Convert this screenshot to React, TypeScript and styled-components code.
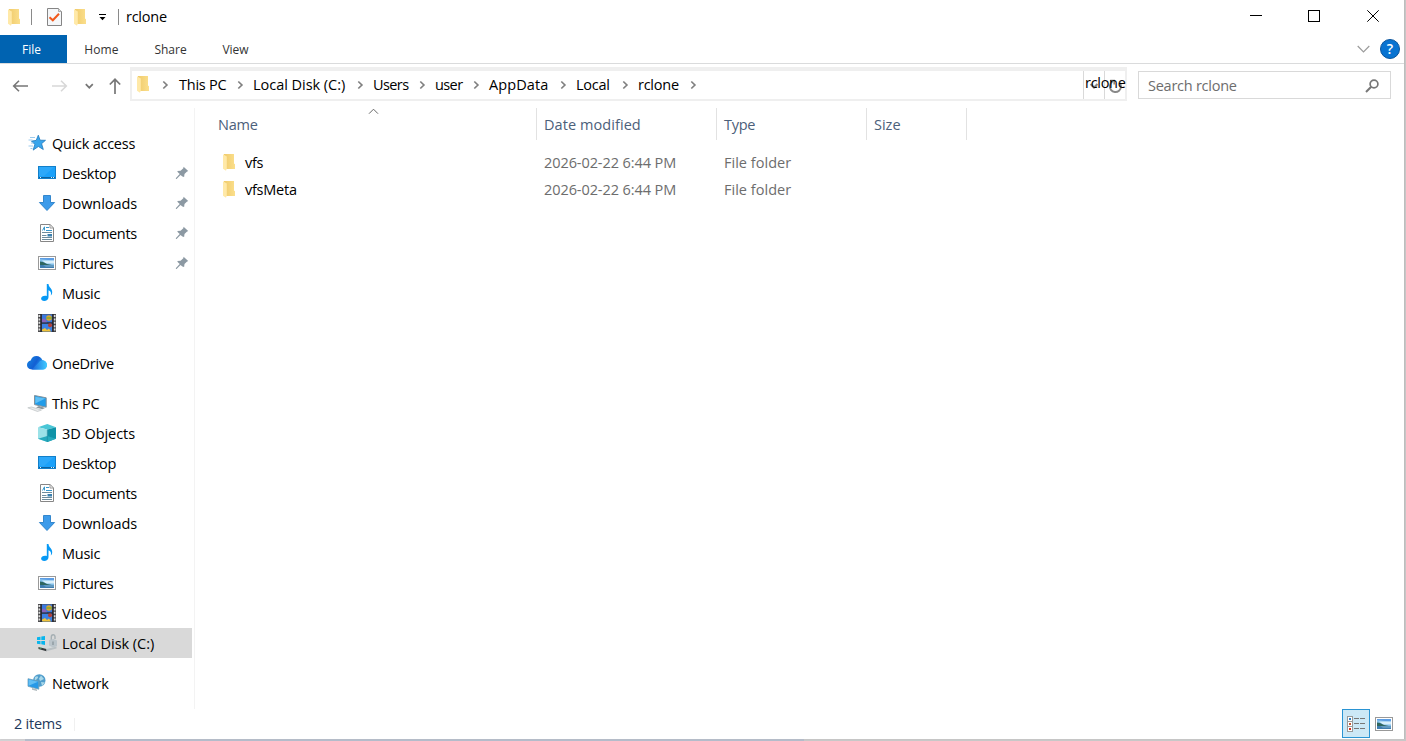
import React from 'react';
import styled, { createGlobalStyle } from 'styled-components';

const GlobalStyle = createGlobalStyle`
  * { box-sizing: border-box; }
  body {
    margin: 0;
    overflow: hidden;
    background: #c9cacc;
    font-family: 'Open Sans', 'Noto Sans', sans-serif;
    font-size: 14.5px;
    color: #000;
  }
  svg { display: block; flex: none; }
`;

const Screen = styled.div`
  width: 1406px;
  height: 741px;
  display: flex;
  flex-direction: column;
  background: linear-gradient(90deg, #d2d2d4 0 25px, #b4bccb 25px 804px, #c8c8c8 804px);
`;

const Window = styled.div`
  width: 1404px;
  height: 739px;
  display: flex;
  flex-direction: column;
  background: #fff;
  box-shadow: 1px 0 1px #bdbdbd;
`;

const TitleBar = styled.header`
  height: 35px;
  display: flex;
  align-items: center;
  padding: 0 2px 2px 7px;
`;

const Divider = styled.span<{ $left: number; $right: number }>`
  width: 1px;
  height: 16px;
  margin: 0 ${p => p.$right}px 0 ${p => p.$left}px;
  background: #8a8a8a;
`;

const Label = styled.span<{ $track?: number; $size?: number }>`
  display: block;
  white-space: nowrap;
  line-height: 20px;
  letter-spacing: ${p => p.$track ?? -0.25}px;
  font-size: ${p => p.$size ?? 14.5}px;
`;

const QuickTools = styled.div`
  display: flex;
  align-items: center;
  gap: 12px;
  margin-left: 11px;
`;

const WindowButtons = styled.div`
  margin-left: auto;
  display: flex;
  padding-bottom: 1px;
`;

const WindowButton = styled.button`
  width: 58.5px;
  height: 32px;
  border: 0;
  padding: 0;
  background: none;
  display: flex;
  align-items: center;
  justify-content: center;
`;

const Ribbon = styled.nav`
  height: 29px;
  display: flex;
  border-bottom: 1px solid #dadbdc;
  padding-right: 4px;
`;

const RibbonTab = styled.div<{ $width: number; $active?: boolean }>`
  width: ${p => p.$width}px;
  height: 28px;
  display: flex;
  align-items: center;
  justify-content: center;
  padding: 2px ${p => (p.$active ? 4 : 0)}px 0 0;
  color: ${p => (p.$active ? '#fff' : '#333')};
  background: ${p => (p.$active ? '#0063b1' : 'none')};
`;

const RibbonTools = styled.div`
  margin-left: auto;
  display: flex;
  align-items: center;
  gap: 10px;
`;

const HelpButton = styled.div`
  width: 20px;
  height: 20px;
  border-radius: 50%;
  border: 1px solid #0a549c;
  background: #0873d1;
  color: #fff;
  font-size: 14px;
  font-weight: 600;
  line-height: 18px;
  text-align: center;
`;

const NavBar = styled.div`
  height: 38px;
  flex: none;
  display: flex;
  align-items: flex-start;
  padding-top: 3px;
`;

const NavButtons = styled.div`
  width: 130px;
  height: 37px;
  display: flex;
  align-items: center;
  padding-left: 12px;
`;

const AddressBar = styled.div`
  width: 997px;
  height: 34px;
  display: flex;
  align-items: center;
  border: 2px solid #efefef;
  border-top-width: 4px;
  padding-left: 4px;
`;

const RootCrumb = styled.div`
  width: 43px;
  display: flex;
  align-items: center;
  gap: 12px;
  > svg:first-child { margin-bottom: 2px; }
`;

const Crumb = styled.span<{ $width: number }>`
  width: ${p => p.$width}px;
  height: 24px;
  display: flex;
  align-items: center;
  justify-content: space-between;
`;

const CrumbArrow = styled.span`
  padding-right: 9px;
`;

const AddressTools = styled.div`
  position: relative;
  margin-left: auto;
  width: 42px;
  height: 28px;
  display: flex;
  border-left: 1px solid #d9d9d9;
`;

const AddressTool = styled.div`
  width: 21px;
  height: 28px;
  padding-top: 2px;
  display: flex;
  align-items: center;
  justify-content: center;
  & + & { border-left: 1px solid #d9d9d9; }
`;

const FloatingName = styled.div`
  position: absolute;
  left: 1px;
  top: 2px;
`;

const SearchBox = styled.div`
  width: 253px;
  height: 28px;
  margin: 4px 0 0 11px;
  border: 1px solid #d9d9d9;
  display: flex;
  align-items: center;
  justify-content: space-between;
  padding: 1px 11px 0 9px;
  color: #6d6d6d;
`;

const Body = styled.div`
  flex: 1;
  display: flex;
  padding-top: 6px;
`;

const Sidebar = styled.aside`
  width: 195px;
  height: 601px;
  border-right: 1px solid #f3f3f3;
  padding-top: 20px;
`;

const SideGroup = styled.div`
  margin-bottom: 10px;
`;

const SideItem = styled.div<{ $root?: boolean; $selected?: boolean }>`
  width: 192px;
  height: 30px;
  display: flex;
  align-items: center;
  gap: 5px;
  padding-left: ${p => (p.$root ? 27 : 37)}px;
  padding-right: 3px;
  background: ${p => (p.$selected ? '#d9d9d9' : 'none')};
  > ${Label} { padding-top: 2px; }
  > svg:last-child { margin-left: auto; }
`;

const IconBox = styled.span`
  width: 20px;
  display: flex;
  justify-content: center;
`;

const FileList = styled.main`
  flex: 1;
`;

const Columns = styled.div`
  position: relative;
  display: flex;
  height: 32px;
  color: #4c607a;
  margin-bottom: 9px;
`;

const Column = styled.div<{ $width: number; $first?: boolean }>`
  width: ${p => p.$width}px;
  height: 32px;
  display: flex;
  align-items: center;
  padding: 2px 0 0 ${p => (p.$first ? 23 : 7)}px;
  border-right: 1px solid #e2e2e2;
`;

const SortMark = styled.div`
  position: absolute;
  left: 173px;
  top: 0;
`;

const FileRow = styled.div`
  height: 27px;
  display: flex;
  align-items: center;
`;

const Cell = styled.div<{ $width: number; $first?: boolean }>`
  width: ${p => p.$width}px;
  display: flex;
  align-items: center;
  gap: 9px;
  padding-left: ${p => (p.$first ? 27 : 7)}px;
  color: ${p => (p.$first ? '#000' : '#6d6d6d')};
  > svg { margin-bottom: 2px; }
`;

const StatusBar = styled.footer`
  height: 30px;
  display: flex;
  align-items: center;
  padding: 0 10px 0 14px;
  color: #1e395b;
`;

const StatusCount = styled.div`
  width: 61px;
  height: 13px;
  display: flex;
  align-items: center;
  border-right: 1px solid #f0f0f0;
`;

const ViewButtons = styled.div`
  margin-left: auto;
  display: flex;
  align-items: center;
  gap: 4px;
  > svg { margin-bottom: 1px; }
`;

const ViewButton = styled.div`
  width: 28px;
  height: 29px;
  border: 1px solid #2a94d3;
  background: #cce8f6;
  display: flex;
  align-items: center;
  justify-content: center;
  margin-bottom: 1px;
`;

const Folder = () => (
  <svg width="14" height="18" viewBox="0 0 14 18">
    <defs>
      <linearGradient id="folderBack"><stop stopColor="#f0cb6c" /><stop offset="1" stopColor="#fbdf8c" /></linearGradient>
    </defs>
    <path d="M2 1H12V10.5L13 11.3V16H4.5L2 14Z" fill="url(#folderBack)" />
    <path d="M1 1.2L4.8 3.4V15.5L4 17.8L1 15.8Z" fill="#ffe9a8" />
  </svg>
);

const TaskSheet = () => (
  <svg width="15" height="18" viewBox="0 0 15 18">
    <path d="M.5 .5H11.5L14.5 3.5V17.5H.5Z" fill="#f5f7f9" stroke="#858585" />
    <path d="M11.5 .5V3.5H14.5" fill="#ddd" stroke="#999" strokeWidth=".8" />
    <path d="M2.5 9.3L5.8 12.3L12 5.7" fill="none" stroke="#f1591c" strokeWidth="2" />
  </svg>
);

const Chevron = () => (
  <svg width="7" height="10" viewBox="0 0 7 10">
    <path d="M1.3 1.5L4.9 5L1.3 8.5" fill="none" stroke="#808080" strokeWidth="1.7" />
  </svg>
);

const Pin = () => (
  <svg width="14" height="14" viewBox="0 0 14 14">
    <path d="M8.6 .8L13.2 5.1L11.8 5.7L9.5 8L9.1 11L7.4 10.6L5.5 8.9L1.6 13L.8 13.1L1 12L4.7 8L2.6 6.1L2.4 5L5.6 4.7L8.3 2.2Z" fill="#8c99a3" />
  </svg>
);

const QuickIcon = () => (
  <svg width="20" height="18" viewBox="0 0 20 18">
    <path d="M11.3 1.2L13.1 6.2L18.5 6.3L14.6 9.7L16.3 15.5L11.4 12.5L6.2 16.1L7.8 10.4L4.5 7.1L9.2 6.4Z" fill="#38a5ec" stroke="#1f78bd" strokeWidth=".8" />
    <path d="M3 3.5H8M1.5 6H5.5M4 9H6.5M1.5 12H6M3.5 14.5H5.5" stroke="#9ccbed" strokeWidth="1" />
  </svg>
);

const DesktopIcon = () => (
  <svg width="20" height="18" viewBox="0 0 20 18">
    <rect x="1.5" y="2.5" width="17" height="12" fill="#1ba1fa" stroke="#127fc9" />
    <path d="M2 3H17L7 12H2Z" fill="#45b3fb" opacity=".4" />
    <path d="M2 13.5H18" stroke="#0c629f" />
    <path d="M3 13.5H4M14 13.5H15M16 13.5H17" stroke="#d8f1ff" />
  </svg>
);

const DownloadIcon = () => (
  <svg width="20" height="18" viewBox="0 0 20 18">
    <path d="M6.5 1.5H13.5V8.5H17.6L10 16.5L2.4 8.5H6.5Z" fill="#3d9bea" stroke="#287fc8" strokeWidth=".9" />
  </svg>
);

const DocumentIcon = () => (
  <svg width="20" height="18" viewBox="0 0 20 18">
    <path d="M3.5 .5H13.2L16.5 4V17.5H3.5Z" fill="#fff" stroke="#868686" />
    <path d="M13 .5V4H16.5" fill="none" stroke="#999" />
    <path d="M5.5 6.5L7.5 2.8V6.5M9 3.5H12M9 6.5H15" fill="none" stroke="#3696cb" />
    <path d="M5 8.5H15M5 11.5H9.5M5 13.5H15M5 15.5H15" stroke="#6d8b9c" />
    <rect x="10.5" y="10" width="4.5" height="2.5" fill="#397fae" />
  </svg>
);

const PictureIcon = () => (
  <svg width="20" height="18" viewBox="0 0 20 18">
    <rect x="1.5" y="2.5" width="17" height="13" fill="#fff" stroke="#999" />
    <rect x="3" y="4" width="14" height="10" fill="#83bfea" />
    <path d="M3 4H17V6.5L11 6L3 5Z" fill="#5c9de4" />
    <path d="M5 6.5H17V9.5H9Z" fill="#d8effb" />
    <path d="M3 7.5L6 8L10 10L16 11.2H3Z" fill="#2f665e" />
    <path d="M3 11L17 11V14H3Z" fill="#3f7db0" />
    <path d="M6 11.5H17V12.5H9Z" fill="#83b5cf" />
  </svg>
);

const MusicIcon = () => (
  <svg width="20" height="18" viewBox="0 0 20 18">
    <path d="M9.8 0H11.5C11.6 3.5 15.6 4.4 15.2 8.7C15.1 9.8 14.5 10.8 13.8 11.4C14.5 8.6 13.7 6.9 11.5 6.2V13.2C11.5 15.5 9.5 17 7.2 17C5.4 17 4.1 16 4.1 14.6C4.1 12.6 6.9 11.3 9.8 12.1Z" fill="#0799f5" />
  </svg>
);

const VideoIcon = () => (
  <svg width="20" height="20" viewBox="0 0 20 20">
    <rect x="1" y="1" width="18" height="18" fill="#4c4c4e" />
    <path d="M2.5 2V19M17.5 2V19" stroke="#ddd" strokeWidth="2" strokeDasharray="2 1.4" />
    <rect x="5" y="1.5" width="10" height="8" fill="#3b79df" />
    <rect x="5" y="10.5" width="10" height="8" fill="#3d82e3" />
    <path d="M4 1V19M16 1V19M4 10H16" stroke="#191d2c" strokeWidth="1.2" />
    <circle cx="12" cy="5" r="2.8" fill="#dda72d" />
    <path d="M9.2 5H15" stroke="#7aa83a" strokeWidth="1.4" />
    <path d="M5 6L8 5.5L10 9.2H5Z" fill="#8765bc" />
    <circle cx="13" cy="12.3" r="2" fill="#b63f36" />
    <path d="M5 18V16.5L8 15L10 17L12 15.5L14 18.5H6Z" fill="#f0c33b" />
  </svg>
);

const CloudIcon = () => (
  <svg width="20" height="18" viewBox="0 0 20 18">
    <defs>
      <linearGradient id="cloudBase" x2="1" y2=".4"><stop stopColor="#1789e4" /><stop offset=".55" stopColor="#135fd3" /><stop offset="1" stopColor="#29b9fb" /></linearGradient>
      <linearGradient id="cloudFront" x2="1" y2="0"><stop stopColor="#1b66dc" /><stop offset="1" stopColor="#40cbff" /></linearGradient>
    </defs>
    <path d="M5 15.5C2 15.5 0 13.5 0 10.8C0 8.4 1.7 6.7 3.7 6.4C4.7 3.5 6.8 2 9.4 2C12.2 2 14.5 3.6 15.4 6.3C18.1 6.5 20 8.4 20 11C20 13.6 18.2 15.5 15.6 15.5Z" fill="url(#cloudBase)" />
    <path d="M5 15.5L11.5 8.7C13 7 14.2 6.2 15.4 6.3C18.1 6.5 20 8.4 20 11C20 13.6 18.2 15.5 15.6 15.5Z" fill="url(#cloudFront)" />
  </svg>
);

const PcIcon = () => (
  <svg width="20" height="18" viewBox="0 0 20 18">
    <path d="M7.5 1.5L19.2 3.8V13.2L7.5 10.6Z" fill="#219ce9" stroke="#83929b" />
    <path d="M8.3 2.8L18.3 4.5L8.3 9.5Z" fill="#60c0f5" />
    <path d="M12 12L18 14L15.5 15.2L9 13.5Z" fill="#8c969b" />
    <path d="M.8 13.8L4.5 13L14.5 16L10.5 17.5Z" fill="#e8eaeb" stroke="#bcc1c3" strokeWidth=".7" />
  </svg>
);

const CubeIcon = () => (
  <svg width="20" height="20" viewBox="0 0 20 20">
    <path d="M1 4.2L10.3 1L19 4.2L10.3 6.5Z" fill="#49c6d6" />
    <path d="M1 4.2L10.3 6.5V19L1 15.8Z" fill="#9be2e8" />
    <path d="M10.3 6.5L19 4.2V15.8L10.3 19Z" fill="#1093a8" />
    <path d="M1 15.8L10.3 13L19 15.8L10.3 19Z" fill="#26aabd" />
    <path d="M10.3 6.5V19" stroke="#148096" strokeWidth=".5" />
  </svg>
);

const DiskIcon = () => (
  <svg width="20" height="18" viewBox="0 0 20 18">
    <path d="M0 3.2L3.5 2.7V6H0ZM4.3 2.6L8 2V6H4.3ZM0 6.9H3.5V10.2L0 9.7ZM4.3 6.9H8V10.9L4.3 10.3Z" fill="#08b5ed" />
    <path d="M1.5 13L9 10.5L19.5 12.5L11 15.5Z" fill="#d5dadb" />
    <path d="M1.5 13L9.5 15V17.3L1.5 15Z" fill="#34393b" />
    <path d="M2.5 14H4.5" stroke="#66d38b" />
    <path d="M9.5 15L19.5 12.5V14.5L9.5 17.3Z" fill="#b9c0c3" />
    <path d="M14.3 6V3C14.3 0 18 0 18 2.8V5" fill="none" stroke="#a5afb3" strokeWidth="1.4" />
    <path d="M12 6L16.5 5L20 6.5V12L16 13.4L12 11.5Z" fill="#bac4ca" />
    <path d="M16 7.5V11" stroke="#7a878d" />
  </svg>
);

const NetworkIcon = () => (
  <svg width="20" height="18" viewBox="0 0 20 18">
    <circle cx="12.3" cy="6.5" r="6.2" fill="#4f9dcc" />
    <path d="M8 3C11 1 12 3 10 5L7.5 7M14 1.5L17 5L13 7L12 4.5ZM14 8L18 8.5L15 12" fill="#aad8e9" />
    <path d="M1 4.7L11.8 7.2V15.2L1 12.3Z" fill="#2799e7" stroke="#6e9fb9" strokeWidth=".8" />
    <path d="M1.6 5.4L11 7.7L1.6 11.7Z" fill="#63bff4" />
    <path d="M5 14L10 15.4V17L5 15.7Z" fill="#b0babe" />
  </svg>
);

const DetailsIcon = () => (
  <svg width="18" height="16" viewBox="0 0 18 16">
    {['#307fc2', '#c25a37', '#d6301d'].map((fill, i) => (
      <g key={fill}>
        <rect x=".5" y={i * 5 + 0.5} width="5" height="5" fill="#fff" stroke="#9a9a9a" />
        <rect x="2" y={i * 5 + 2} width="2" height="2" fill={fill} />
        <path d={`M7 ${i * 5 + 2.5}H12M13 ${i * 5 + 2.5}H18`} stroke="#777" />
      </g>
    ))}
  </svg>
);

const crumbs: { name: string; width: number; track?: number }[] = [
  { name: 'This PC', width: 74 },
  { name: 'Local Disk (C:)', width: 120, track: -0.03 },
  { name: 'Users', width: 62, track: -0.6 },
  { name: 'user', width: 54, track: -0.6 },
  { name: 'AppData', width: 87, track: 0.1 },
  { name: 'Local', width: 62 },
  { name: 'rclone', width: 68 },
];

type Entry = {
  name: string;
  icon: React.ReactNode;
  track?: number;
  root?: boolean;
  pinned?: boolean;
  selected?: boolean;
};

const groups: Entry[][] = [
  [
    { name: 'Quick access', icon: <QuickIcon />, root: true },
    { name: 'Desktop', icon: <DesktopIcon />, pinned: true },
    { name: 'Downloads', icon: <DownloadIcon />, track: -0.05, pinned: true },
    { name: 'Documents', icon: <DocumentIcon />, track: -0.3, pinned: true },
    { name: 'Pictures', icon: <PictureIcon />, track: -0.4, pinned: true },
    { name: 'Music', icon: <MusicIcon /> },
    { name: 'Videos', icon: <VideoIcon />, track: 0 },
  ],
  [{ name: 'OneDrive', icon: <CloudIcon />, root: true }],
  [
    { name: 'This PC', icon: <PcIcon />, root: true },
    { name: '3D Objects', icon: <CubeIcon />, track: -0.05 },
    { name: 'Desktop', icon: <DesktopIcon /> },
    { name: 'Documents', icon: <DocumentIcon />, track: -0.3 },
    { name: 'Downloads', icon: <DownloadIcon />, track: -0.05 },
    { name: 'Music', icon: <MusicIcon /> },
    { name: 'Pictures', icon: <PictureIcon />, track: -0.4 },
    { name: 'Videos', icon: <VideoIcon />, track: 0 },
    { name: 'Local Disk (C:)', icon: <DiskIcon />, track: -0.03, selected: true },
  ],
  [{ name: 'Network', icon: <NetworkIcon />, track: -0.15, root: true }],
];

export default function App() {
  return (
    <Screen>
      <GlobalStyle />
      <Window>
        <TitleBar>
          <Folder />
          <Divider $left={10} $right={15} />
          <TaskSheet />
          <QuickTools>
            <Folder />
            <svg width="8" height="8" viewBox="0 0 8 8">
              <path d="M0 1.5H7" stroke="#000" />
              <path d="M.5 4H6.5L3.5 7.2Z" fill="#000" />
            </svg>
          </QuickTools>
          <Divider $left={11} $right={7} />
          <Label>rclone</Label>
          <WindowButtons>
            <WindowButton>
              <svg width="12" height="12"><path d="M0 5.5H12" stroke="#000" /></svg>
            </WindowButton>
            <WindowButton>
              <svg width="12" height="12"><rect x=".5" y=".5" width="11" height="11" fill="none" stroke="#000" /></svg>
            </WindowButton>
            <WindowButton>
              <svg width="12" height="12"><path d="M.3 .3L11.7 11.7M11.7 .3L.3 11.7" stroke="#000" /></svg>
            </WindowButton>
          </WindowButtons>
        </TitleBar>

        <Ribbon>
          <RibbonTab $width={67} $active><Label $size={12} $track={0}>File</Label></RibbonTab>
          <RibbonTab $width={69}><Label $size={12} $track={0.1}>Home</Label></RibbonTab>
          <RibbonTab $width={69}><Label $size={12} $track={0}>Share</Label></RibbonTab>
          <RibbonTab $width={61}><Label $size={12} $track={0}>View</Label></RibbonTab>
          <RibbonTools>
            <svg width="13" height="8"><path d="M.7 1L6.5 6.8L12.3 1" fill="none" stroke="#9b9b9b" strokeWidth="1.2" /></svg>
            <HelpButton>?</HelpButton>
          </RibbonTools>
        </Ribbon>

        <NavBar>
          <NavButtons>
            <svg width="118" height="18" viewBox="0 0 118 18">
              <path d="M1.7 9H16M7 3.8L1.7 9L7 14.2" fill="none" stroke="#777" strokeWidth="1.6" />
              <path d="M40 9H54.3M49 3.8L54.3 9L49 14.2" fill="none" stroke="#d8d8d8" strokeWidth="1.6" />
              <path d="M73.8 7.2L77.3 10.7L80.8 7.2" fill="none" stroke="#777" strokeWidth="1.7" />
              <path d="M103 17V2.5M97.8 7.5L103 2.3L108.2 7.5" fill="none" stroke="#777" strokeWidth="1.7" />
            </svg>
          </NavButtons>
          <AddressBar>
            <RootCrumb><Folder /><Chevron /></RootCrumb>
            {crumbs.map(crumb => (
              <Crumb key={crumb.name} $width={crumb.width}>
                <Label $track={crumb.track}>{crumb.name}</Label>
                <CrumbArrow><Chevron /></CrumbArrow>
              </Crumb>
            ))}
            <AddressTools>
              <AddressTool>
                <svg width="10" height="8"><path d="M1.5 2L5 5.5L8.5 2" fill="none" stroke="#888" strokeWidth="2" /></svg>
              </AddressTool>
              <AddressTool>
                <svg width="15" height="15" viewBox="0 0 15 15">
                  <path d="M11.5 3.6A5.6 5.6 0 1 1 4.3 2.8" fill="none" stroke="#888" strokeWidth="1.9" />
                  <path d="M2.2 1.6H6.2V5.6" fill="none" stroke="#888" strokeWidth="1.6" />
                </svg>
              </AddressTool>
              <FloatingName><Label $track={-0.3}>rclone</Label></FloatingName>
            </AddressTools>
          </AddressBar>
          <SearchBox>
            <Label>Search rclone</Label>
            <svg width="14" height="14" viewBox="0 0 14 14">
              <circle cx="9" cy="5" r="3.9" fill="none" stroke="#777" strokeWidth="1.7" />
              <path d="M6.2 7.8L1 13" stroke="#777" strokeWidth="2" />
            </svg>
          </SearchBox>
        </NavBar>

        <Body>
          <Sidebar>
            {groups.map((group, i) => (
              <SideGroup key={i}>
                {group.map(item => (
                  <SideItem key={item.name} $root={item.root} $selected={item.selected}>
                    <IconBox>{item.icon}</IconBox>
                    <Label $track={item.track}>{item.name}</Label>
                    {item.pinned && <Pin />}
                  </SideItem>
                ))}
              </SideGroup>
            ))}
          </Sidebar>
          <FileList>
            <Columns>
              <Column $width={342} $first><Label>Name</Label></Column>
              <Column $width={180}><Label $track={0.07}>Date modified</Label></Column>
              <Column $width={150}><Label>Type</Label></Column>
              <Column $width={100}><Label $track={0}>Size</Label></Column>
              <SortMark>
                <svg width="11" height="7"><path d="M1 5.7L5.5 1.2L10 5.7" fill="none" stroke="#666" /></svg>
              </SortMark>
            </Columns>
            {['vfs', 'vfsMeta'].map(name => (
              <FileRow key={name}>
                <Cell $width={342} $first><Folder /><Label>{name}</Label></Cell>
                <Cell $width={180}><Label $track={-0.08}>2026-02-22 6:44 PM</Label></Cell>
                <Cell $width={150}><Label $track={0.02}>File folder</Label></Cell>
              </FileRow>
            ))}
          </FileList>
        </Body>

        <StatusBar>
          <StatusCount><Label>2 items</Label></StatusCount>
          <ViewButtons>
            <ViewButton><DetailsIcon /></ViewButton>
            <PictureIcon />
          </ViewButtons>
        </StatusBar>
      </Window>
    </Screen>
  );
}
